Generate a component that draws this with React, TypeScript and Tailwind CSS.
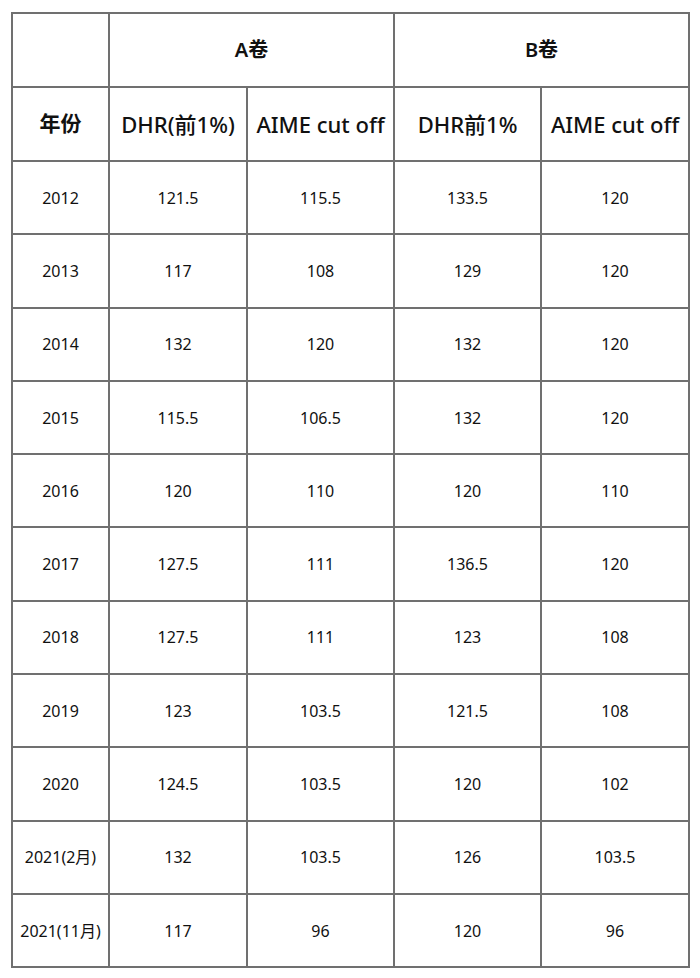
const rows: [string, string, string, string, string][] = [
  ['2012', '121.5', '115.5', '133.5', '120'],
  ['2013', '117', '108', '129', '120'],
  ['2014', '132', '120', '132', '120'],
  ['2015', '115.5', '106.5', '132', '120'],
  ['2016', '120', '110', '120', '110'],
  ['2017', '127.5', '111', '136.5', '120'],
  ['2018', '127.5', '111', '123', '108'],
  ['2019', '123', '103.5', '121.5', '108'],
  ['2020', '124.5', '103.5', '120', '102'],
  ['2021(2月)', '132', '103.5', '126', '103.5'],
  ['2021(11月)', '117', '96', '120', '96'],
];

const cell = 'border-2 border-[#707070] text-center align-middle p-0';

export default function App() {
  return (
    <div className="w-[700px] h-[978px] bg-white pt-[12px] pl-[11px] font-['Noto_Sans','Noto_Sans_CJK_SC',sans-serif] text-[#111]">
      <table className="table-fixed border-collapse w-[677px]">
        <colgroup>
          <col className="w-[97px]" />
          <col className="w-[138px]" />
          <col className="w-[147px]" />
          <col className="w-[147px]" />
          <col className="w-[148px]" />
        </colgroup>
        <thead>
          <tr className="h-[74px]">
            <th className={cell}></th>
            <th colSpan={2} className={`${cell} text-[20px] font-semibold`}>A卷</th>
            <th colSpan={2} className={`${cell} text-[20px] font-semibold`}>B卷</th>
          </tr>
          <tr className="h-[74px]">
            <th className={`${cell} text-[21px] font-semibold`}>年份</th>
            <th className={`${cell} text-[22px] font-medium whitespace-nowrap`}>DHR(前1%)</th>
            <th className={`${cell} text-[22px] font-medium whitespace-nowrap`}>AIME cut off</th>
            <th className={`${cell} text-[22px] font-medium whitespace-nowrap`}>DHR前1%</th>
            <th className={`${cell} text-[22px] font-medium whitespace-nowrap`}>AIME cut off</th>
          </tr>
        </thead>
        <tbody>
          {rows.map((r) => (
            <tr key={r[0]} className="h-[73.3px]">
              {r.map((v, i) => (
                <td key={i} className={`${cell} text-[16px] whitespace-nowrap`}>
                  {v}
                </td>
              ))}
            </tr>
          ))}
        </tbody>
      </table>
    </div>
  );
}
